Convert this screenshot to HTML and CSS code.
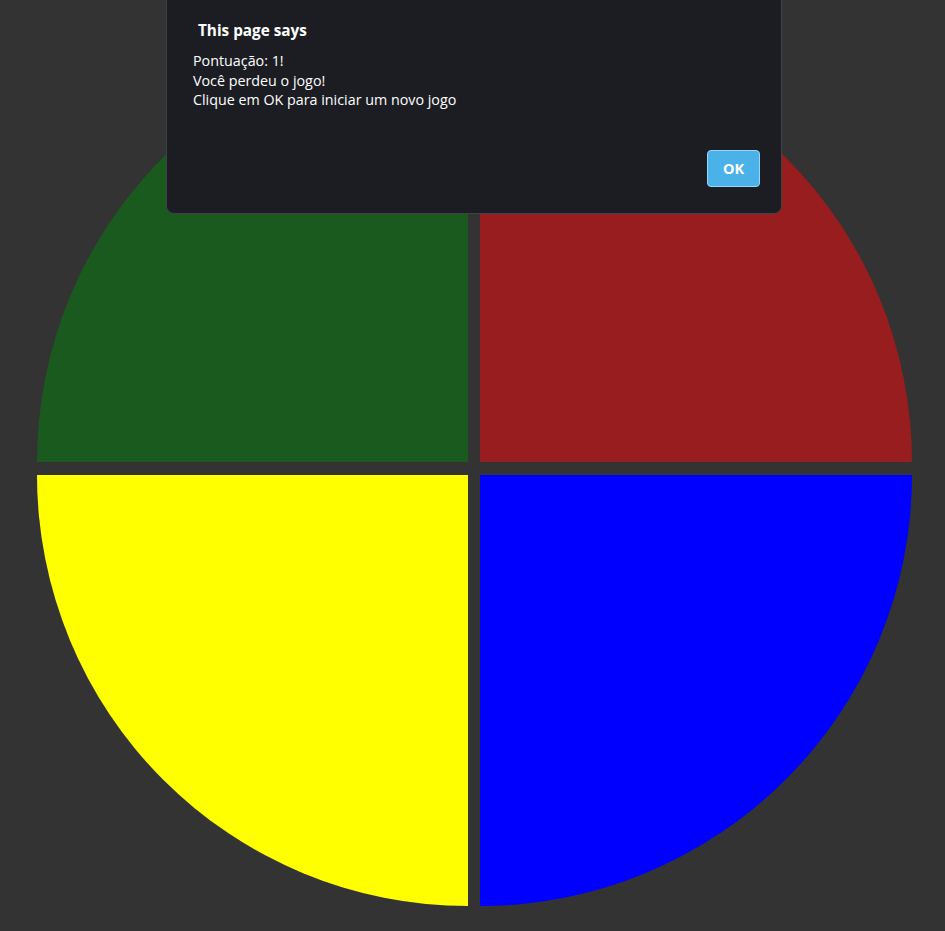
FILE: index.html
```html
<!DOCTYPE html>
<html lang="pt">
<head>
<meta charset="utf-8">
<title>Genius</title>
<link rel="stylesheet" href="styles.css">
</head>
<body>
<main class="board">
  <div class="pad pad-green"></div>
  <div class="pad pad-red"></div>
  <div class="pad pad-yellow"></div>
  <div class="pad pad-blue"></div>
</main>
<div class="dialog" role="alertdialog">
  <div class="dialog-title">This page says</div>
  <div class="dialog-msg">
    <div>Pontuação: 1!</div>
    <div>Você perdeu o jogo!</div>
    <div>Clique em OK para iniciar um novo jogo</div>
  </div>
  <div class="dialog-actions">
    <button class="btn-ok">OK</button>
  </div>
</div>
</body>
</html>
```
FILE: styles.css
```css
html, body {
  margin: 0;
  padding: 0;
  background: #333333;
  height: 100%;
  overflow: hidden;
}
body {
  font-family: "Open Sans", "Noto Sans", sans-serif;
}
.board {
  display: grid;
  grid-template-columns: 431px 432px;
  grid-template-rows: 431px 431px;
  column-gap: 12px;
  row-gap: 13px;
  padding: 31px 0 0 37px;
}
.pad-green {
  background: #1b5a1e;
  border-top-left-radius: 100%;
}
.pad-red {
  background: #971d1e;
  border-top-right-radius: 100%;
}
.pad-yellow {
  background: #ffff00;
  border-bottom-left-radius: 100%;
}
.pad-blue {
  background: #0000ff;
  border-bottom-right-radius: 100%;
}
.dialog {
  position: absolute;
  left: 166px;
  top: -10px;
  width: 616px;
  height: 224px;
  box-sizing: border-box;
  background: #1b1d22;
  border: 1px solid #3d424b;
  border-radius: 8px;
  color: #ffffff;
  display: flex;
  flex-direction: column;
}
.dialog-title {
  font-weight: 700;
  font-size: 15.3px;
  line-height: 20px;
  margin: 29px 0 0 31px;
}
.dialog-msg {
  font-size: 14.3px;
  line-height: 19.5px;
  margin: 11px 0 0 26px;
}
.dialog-actions {
  margin-top: auto;
  display: flex;
  justify-content: flex-end;
  padding: 0 21px 26px 0;
}
.btn-ok {
  width: 53px;
  height: 37px;
  box-sizing: border-box;
  background: #4ab2e8;
  border: 1px solid #9ad6f5;
  border-radius: 4px;
  color: #ffffff;
  font-family: "Open Sans", "Noto Sans", sans-serif;
  font-weight: 700;
  font-size: 14.5px;
  padding: 0;
}
```
